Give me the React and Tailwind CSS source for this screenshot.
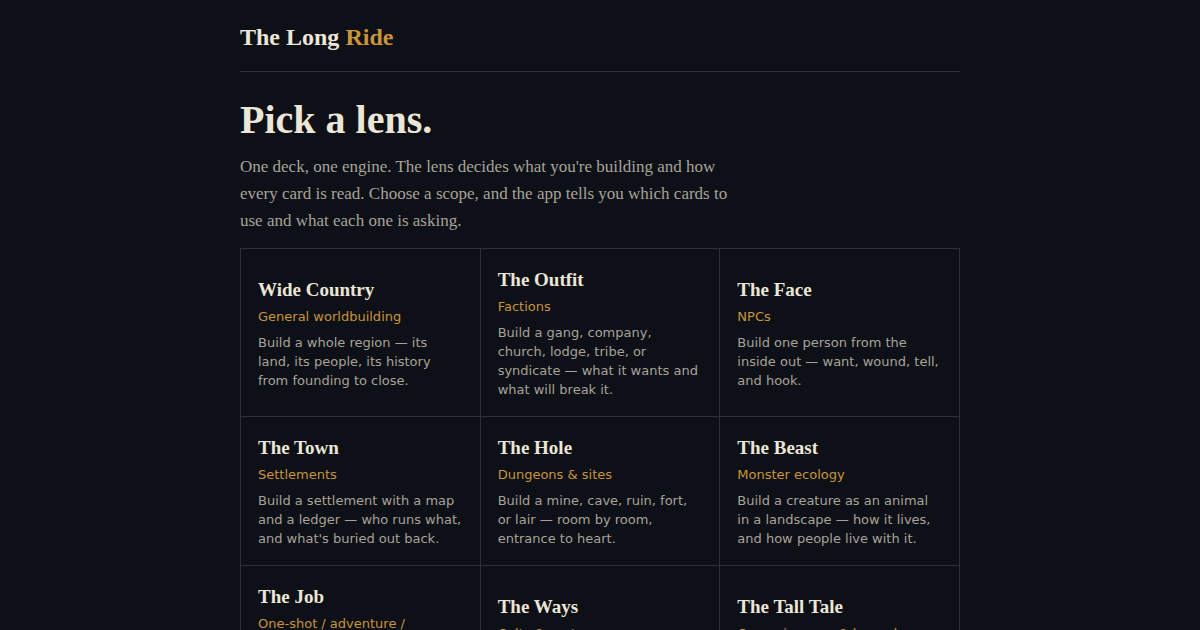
import React from 'react';

const lenses = [
  { title: 'Wide Country', tag: 'General worldbuilding', body: 'Build a whole region — its land, its people, its history from founding to close.' },
  { title: 'The Outfit', tag: 'Factions', body: 'Build a gang, company, church, lodge, tribe, or syndicate — what it wants and what will break it.' },
  { title: 'The Face', tag: 'NPCs', body: 'Build one person from the inside out — want, wound, tell, and hook.' },
  { title: 'The Town', tag: 'Settlements', body: "Build a settlement with a map and a ledger — who runs what, and what's buried out back." },
  { title: 'The Hole', tag: 'Dungeons & sites', body: 'Build a mine, cave, ruin, fort, or lair — room by room, entrance to heart.' },
  { title: 'The Beast', tag: 'Monster ecology', body: 'Build a creature as an animal in a landscape — how it lives, and how people live with it.' },
  { title: 'The Job', tag: 'One-shot / adventure / scenario', body: 'Build a single night of trouble — the hook, the heat, and the way out.' },
  { title: 'The Ways', tag: 'Cults & customs', body: 'Build what a people believe and do — rites, rules, and what they forbid.' },
  { title: 'The Tall Tale', tag: 'Campaign arcs & legends', body: 'Build the story folks tell for years — how it starts and how it ends.' },
];

export default function App() {
  return (
    <div className="min-h-screen bg-[#0d1017] text-[#ece6d6]">
      <div className="w-[720px] mx-auto">
        <header className="pt-[21px] pb-[18px] border-b border-[#2b2f38]">
          <div className="font-['Liberation_Serif',serif] text-[24px] leading-[32px] font-bold">
            The Long <span className="text-[#c9943a]">Ride</span>
          </div>
        </header>

        <h1 className="mt-[24px] font-['Liberation_Serif',serif] text-[40px] leading-[48px] font-bold">Pick a lens.</h1>
        <p className="mt-[9px] max-w-[500px] font-['Liberation_Serif',serif] text-[17px] leading-[27px] text-[#a8a398]">
          One deck, one engine. The lens decides what you're building and how every card is read. Choose a scope, and the app tells you which cards to use and what each one is asking.
        </p>

        <div className="mt-[14px] grid grid-cols-3 border-t border-l border-[#2b2f38]">
          {lenses.map((l) => (
            <div key={l.title} className="flex flex-col justify-center px-[17px] pt-[19px] pb-[17px] border-r border-b border-[#2b2f38]">
              <h2 className="font-['Liberation_Serif',serif] text-[19px] leading-[24px] font-bold text-[#ece6d6]">{l.title}</h2>
              <div className="mt-[5px] font-['DejaVu_Sans',sans-serif] text-[13px] leading-[19px] text-[#c9943a]">{l.tag}</div>
              <p className="mt-[7px] font-['DejaVu_Sans',sans-serif] text-[13px] leading-[19px] text-[#a8a398]">{l.body}</p>
            </div>
          ))}
        </div>
      </div>
    </div>
  );
}
